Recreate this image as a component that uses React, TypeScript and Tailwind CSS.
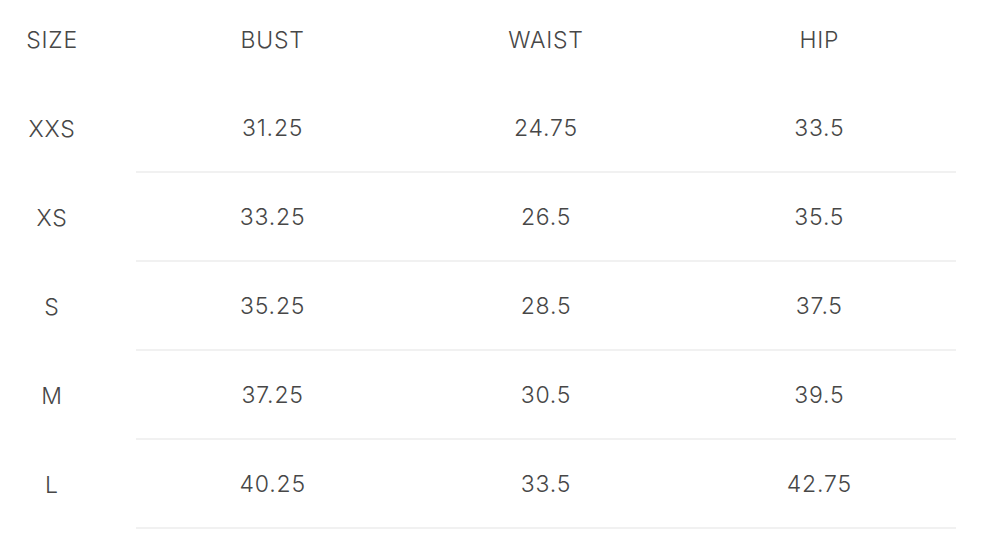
const rows = [
  { size: "XXS", bust: "31.25", waist: "24.75", hip: "33.5" },
  { size: "XS", bust: "33.25", waist: "26.5", hip: "35.5" },
  { size: "S", bust: "35.25", waist: "28.5", hip: "37.5" },
  { size: "M", bust: "37.25", waist: "30.5", hip: "39.5" },
  { size: "L", bust: "40.25", waist: "33.5", hip: "42.75" },
];

export default function App() {
  return (
    <div className="w-[986px] h-[554px] bg-white pr-[30px] text-[#474747] text-[23px] font-light tracking-[0.8px] font-['Inter',sans-serif] leading-none overflow-hidden">
      <div className="flex h-[84px] items-center pb-[4px]">
        <div className="w-[104px] text-center">SIZE</div>
        <div className="ml-[32px] flex-1 grid grid-cols-3 text-center">
          <div>BUST</div>
          <div>WAIST</div>
          <div>HIP</div>
        </div>
      </div>
      {rows.map((r) => (
        <div key={r.size} className="flex h-[89px]">
          <div className="w-[104px] flex items-center justify-center pt-[2px]">{r.size}</div>
          <div className="ml-[32px] flex-1 grid grid-cols-3 items-center text-center pt-[2px] border-b-2 border-[#f1f1f1]">
            <div>{r.bust}</div>
            <div>{r.waist}</div>
            <div>{r.hip}</div>
          </div>
        </div>
      ))}
    </div>
  );
}
